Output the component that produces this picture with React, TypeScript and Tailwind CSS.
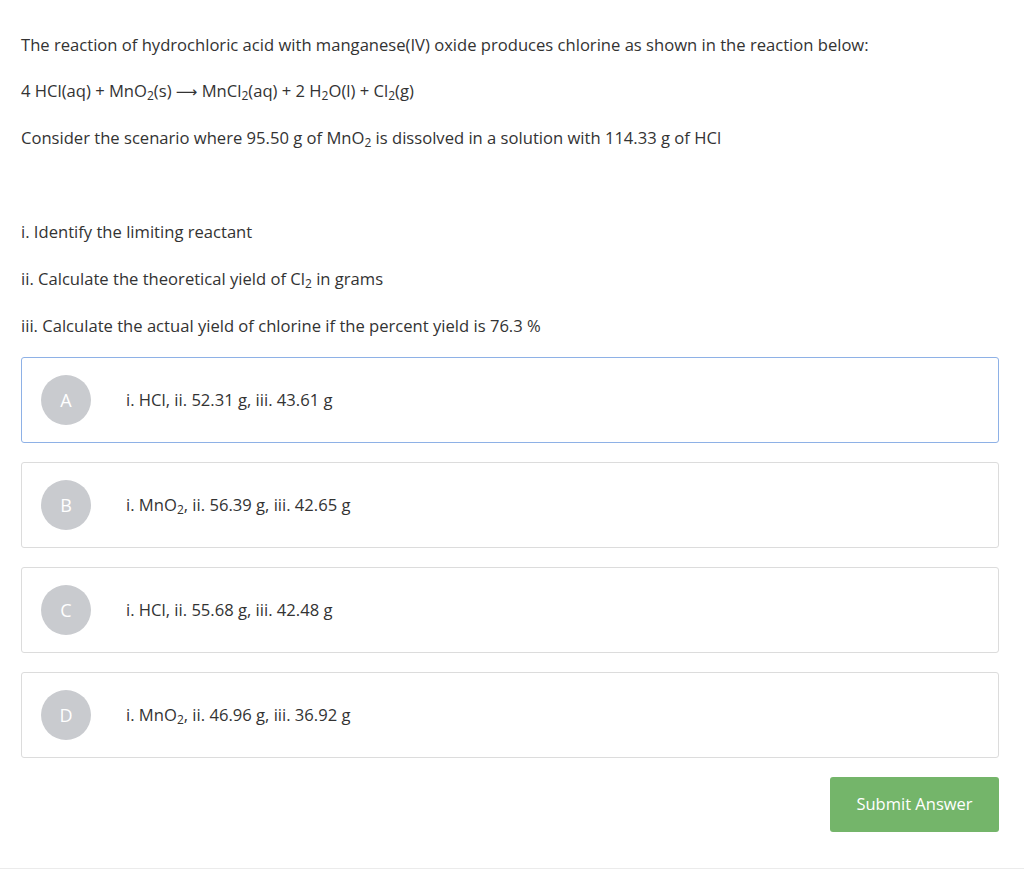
import React from 'react';

const Sub = ({ children }: { children: React.ReactNode }) => (
  <sub className="relative top-[3px] align-baseline text-[12px] leading-none">{children}</sub>
);

const options = [
  { letter: 'A', body: <>i. HCl, ii. 52.31 g, iii. 43.61 g</>, active: true },
  { letter: 'B', body: <>i. MnO<Sub>2</Sub>, ii. 56.39 g, iii. 42.65 g</> },
  { letter: 'C', body: <>i. HCl, ii. 55.68 g, iii. 42.48 g</> },
  { letter: 'D', body: <>i. MnO<Sub>2</Sub>, ii. 46.96 g, iii. 36.92 g</> },
];

export default function App() {
  return (
    <div className="min-h-screen bg-white font-['Open_Sans',sans-serif] text-[16.6px] text-[#333]">
      <div className="px-[21px] pt-[33px] pr-[25px]">
        <p className="mb-[22px] leading-6">
          The reaction of hydrochloric acid with manganese(IV) oxide produces chlorine as shown in the reaction below:
        </p>
        <p className="mb-[22px] leading-6">
          4 HCl(aq) + MnO<Sub>2</Sub>(s) <span className="font-['DejaVu_Sans',sans-serif] text-[15px]">⟶</span> MnCl<Sub>2</Sub>(aq) + 2 H<Sub>2</Sub>O(l) + Cl<Sub>2</Sub>(g)
        </p>
        <p className="mb-[70px] leading-6">
          Consider the scenario where 95.50 g of MnO<Sub>2</Sub> is dissolved in a solution with 114.33 g of HCl
        </p>
        <p className="mb-[23px] leading-6">i. Identify the limiting reactant</p>
        <p className="mb-[23px] leading-6">
          ii. Calculate the theoretical yield of Cl<Sub>2</Sub> in grams
        </p>
        <p className="mb-[19px] leading-6">iii. Calculate the actual yield of chlorine if the percent yield is 76.3 %</p>

        <div className="flex flex-col gap-[19px]">
          {options.map((o) => (
            <div
              key={o.letter}
              className={`flex h-[86px] items-center rounded-[3px] border bg-white pl-[19px] ${
                o.active ? 'border-[#8eb1e6]' : 'border-[#dcdcdc]'
              }`}
            >
              <div className="flex h-[50px] w-[50px] items-center justify-center rounded-full bg-[#c9cbcf] text-[18px] text-white">
                {o.letter}
              </div>
              <div className="ml-[35px] leading-6">{o.body}</div>
            </div>
          ))}
        </div>

        <div className="mt-[19px] flex justify-end">
          <button className="h-[55px] w-[169px] rounded-[3px] bg-[#74b56a] text-[16.5px] text-white">
            Submit Answer
          </button>
        </div>
      </div>
      <div className="mt-[36px] border-t border-[#ebebeb]" />
    </div>
  );
}
